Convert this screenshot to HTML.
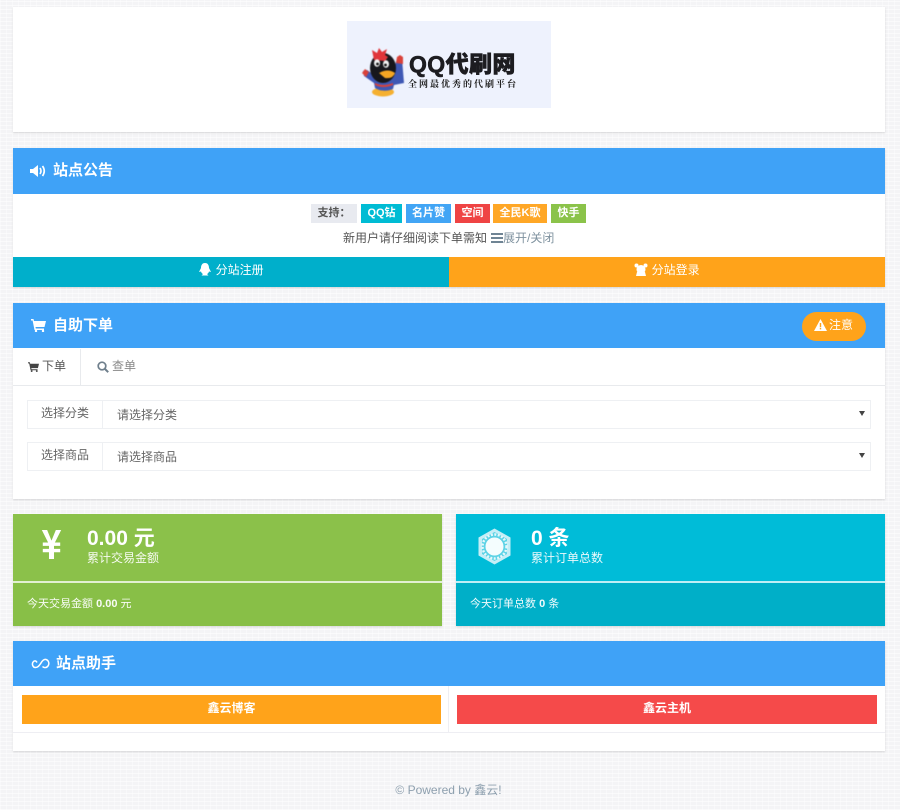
<!DOCTYPE html>
<html lang="zh-CN">
<head>
<meta charset="utf-8">
<title>QQ代刷网</title>
<style>
*{box-sizing:border-box}
html,body{margin:0;padding:0}
body{width:900px;height:810px;position:relative;overflow:hidden;font-family:"Liberation Sans","Noto Sans CJK SC",sans-serif;font-size:12px;color:#555;background-color:#f4f4f6;background-image:repeating-linear-gradient(0deg,rgba(255,255,255,.55) 0 1px,transparent 1px 4px),repeating-linear-gradient(90deg,rgba(255,255,255,.4) 0 1px,transparent 1px 6px)}
#wrap{position:absolute;left:0;top:0;width:900px;height:810px;filter:blur(.35px)}
.a{position:absolute}
.panel{position:absolute;left:13px;width:872px;background:#fff;box-shadow:0 1px 2px rgba(0,0,0,.13)}
.head{position:absolute;left:0;top:0;width:100%;height:46px;background:#3fa2f7;color:#fff;font-size:15px;font-weight:bold;line-height:45px}
.head svg{position:absolute}
.head span{position:absolute;top:0;white-space:nowrap}
.tag{position:absolute;top:204px;height:19px;line-height:18px;text-align:center;color:#fff;font-size:11px;font-weight:bold}
.btn{position:absolute;color:#fff;text-align:center;font-size:12px}
.grp{position:absolute;left:14px;width:844px;height:29px;border:1px solid #eef0f3;background:#fff}
.grp b{position:absolute;left:0;top:0;width:75px;height:27px;border-right:1px solid #eef0f3;font-weight:normal;text-align:center;line-height:24px;color:#666}
.grp i{position:absolute;left:89px;top:0;font-style:normal;line-height:28px;color:#666}
.grp u{position:absolute;right:5px;top:10px;width:0;height:0;border-left:3px solid transparent;border-right:3px solid transparent;border-top:5px solid #444}
.stat{position:absolute;top:514px;width:429px;height:112px;color:#fff;box-shadow:0 1px 2px rgba(0,0,0,.12)}
.stat .line{position:absolute;left:0;top:67px;width:100%;height:2px;background:rgba(255,255,255,.75)}
.stat .bot{position:absolute;left:0;top:69px;width:100%;height:43px}
.stat .num{position:absolute;top:11px;font-size:21px;font-weight:bold;line-height:28px;white-space:nowrap}
.stat .sub{position:absolute;top:35px;font-size:12px;line-height:18px;white-space:nowrap;opacity:.92}
.stat .today{position:absolute;left:14px;top:12px;font-size:11px;line-height:18px;white-space:nowrap;opacity:.95}
</style>
</head>
<body>
<div id="wrap">

<div class="panel" style="top:7px;height:125px"></div>
<div class="a" style="left:347px;top:21px;width:204px;height:87px;background:#eef2fd">
<svg width="204" height="87" viewBox="0 0 204 87" style="position:absolute;left:0;top:0;filter:blur(.5px)">
<ellipse cx="36" cy="71" rx="11" ry="4.500" fill="#f5b030"/>
<path d="M16 50 L20 49 L30 56 L44 56 L50 38 L55 38 L57 62 L47 64 L46 68 Q36 72 28 67 L27 62 L17 55Z" fill="#3f58b4"/>
<path d="M49 42 L50 36 L53 34 L56 36 L56 43Z" fill="#d9423a"/>
<path d="M15 52 L18 48 L22 51 L19 56Z" fill="#d9423a"/>
<path d="M28 62 Q36 66 46 62 L46 64 Q36 68 28 64Z" fill="#d9423a"/>
<ellipse cx="36" cy="47" rx="13" ry="15" fill="#17171c"/>
<path d="M27 39 L25 29 L30 32 L32 27 L35 31 L40 28 L38 34 L41 36 L38 40Z" fill="#e0353a"/>
<ellipse cx="30" cy="42" rx="3" ry="3.800" fill="#f2f2f2"/>
<ellipse cx="39" cy="43" rx="3" ry="3.800" fill="#f2f2f2"/>
<circle cx="30.500" cy="43" r="1.400" fill="#111"/>
<circle cx="38.500" cy="44" r="1.400" fill="#111"/>
<path d="M32 52 Q41 47 48 52 Q46 58 38 57Z" fill="#f5a623"/>
</svg>
<div class="a" style="left:62px;top:29px;font-size:23px;line-height:28px;font-weight:900;color:#1c1c20;white-space:nowrap;letter-spacing:.4px;-webkit-text-stroke:.6px #1c1c20;filter:blur(.3px)">QQ代刷网</div>
<div class="a" style="left:61px;top:57px;font-size:9px;line-height:12px;font-weight:bold;color:#222;white-space:nowrap;letter-spacing:2px;font-family:'Noto Serif CJK SC',serif">全网最优秀的代刷平台</div>
</div>

<div class="panel" style="top:148px;height:139px">
<div class="head">
<svg style="left:17px;top:17px" width="17" height="12" viewBox="0 0 17 12"><path d="M0 4H3L8 0V12L3 8H0Z" fill="#fff"/><path d="M10 3Q12 6 10 9M12.500 1Q16 6 12.500 11" stroke="#fff" stroke-width="1.700" fill="none"/></svg>
<span style="left:40px">站点公告</span>
</div>
<div class="btn" style="left:0;top:109px;width:436px;height:30px;background:#00afcb;line-height:26px"><svg width="14" height="13" viewBox="0 0 14 13" style="vertical-align:-2px"><path d="M7 0C4 0 3 2.500 3 5L1 9 3 8.500C3.500 10 4 10.500 5 11L3.500 12.500H10.500L9 11C10 10.500 10.500 10 11 8.500L13 9 11 5C11 2.500 10 0 7 0Z" fill="#fff"/></svg> 分站注册</div>
<div class="btn" style="left:436px;top:109px;width:436px;height:30px;background:#ffa31a;line-height:26px"><svg width="14" height="13" viewBox="0 0 14 13" style="vertical-align:-2px"><circle cx="7" cy="6.500" r="4.500" fill="#fff"/><circle cx="2.500" cy="2.500" r="2" fill="#fff"/><circle cx="11.500" cy="2.500" r="2" fill="#fff"/><path d="M3 9H11L12 13H2Z" fill="#fff"/></svg> 分站登录</div>
</div>
<div class="tag" style="left:311px;width:46px;background:#e8eaf0;color:#555">支持：</div>
<div class="tag" style="left:361px;width:41px;background:#00bcd4">QQ钻</div>
<div class="tag" style="left:406px;width:45px;background:#42a5f5">名片赞</div>
<div class="tag" style="left:455px;width:35px;background:#ef4444">空间</div>
<div class="tag" style="left:493px;width:54px;background:#ffa726">全民K歌</div>
<div class="tag" style="left:551px;width:35px;background:#8bc34a">快手</div>
<div class="a" style="left:343px;top:229px;line-height:18px;white-space:nowrap;color:#555">新用户请仔细阅读下单需知</div>
<svg class="a" style="left:491px;top:233px" width="12" height="10" viewBox="0 0 12 10"><path d="M0 0H12V2H0ZM0 4H12V6H0ZM0 8H12V10H0Z" fill="#6f8494"/></svg>
<div class="a" style="left:503px;top:229px;line-height:18px;white-space:nowrap;color:#7f929f">展开/关闭</div>

<div class="panel" style="top:303px;height:196px">
<div class="head" style="height:45px">
<svg style="left:18px;top:16px" width="15" height="13" viewBox="0 0 15 13"><path d="M0 0H2.500L3 2H15L13.500 8H4.500L4.800 9.500H13V11H3.500L1.600 1.500H0Z" fill="#fff"/><circle cx="5" cy="12" r="1.200" fill="#fff"/><circle cx="12" cy="12" r="1.200" fill="#fff"/></svg>
<span style="left:40px">自助下单</span>
</div>
<div class="a" style="left:789px;top:9px;width:64px;height:29px;border-radius:15px;background:#ffa31a;color:#fff;line-height:27px;padding-left:27px;font-size:12px">注意</div>
<svg class="a" style="left:801px;top:16px" width="13" height="12" viewBox="0 0 13 12"><path fill-rule="evenodd" d="M6.500 0L13 12H0ZM5.800 4V8.200H7.200V4ZM5.800 9V10.400H7.200V9Z" fill="#fff"/></svg>
<div class="a" style="left:0;top:82px;width:872px;height:1px;background:#e8eaed"></div>
<div class="a" style="left:67px;top:46px;width:1px;height:37px;background:#e8eaed"></div>
<svg class="a" style="left:15px;top:59px" width="11" height="10" viewBox="0 0 15 13"><path d="M0 0H2.500L3 2H15L13.500 8H4.500L4.800 9.500H13V11H3.500L1.600 1.500H0Z" fill="#444"/><circle cx="5" cy="12" r="1.300" fill="#444"/><circle cx="12" cy="12" r="1.300" fill="#444"/></svg>
<div class="a" style="left:29px;top:54px;line-height:18px;color:#555">下单</div>
<svg class="a" style="left:84px;top:58px" width="12" height="12" viewBox="0 0 12 12"><circle cx="5" cy="5" r="3.800" stroke="#6f7f8c" stroke-width="1.700" fill="none"/><path d="M8 8L11.200 11.200" stroke="#6f7f8c" stroke-width="2"/></svg>
<div class="a" style="left:99px;top:54px;line-height:18px;color:#888">查单</div>
<div class="grp" style="top:97px"><b>选择分类</b><i>请选择分类</i><u></u></div>
<div class="grp" style="top:139px"><b>选择商品</b><i>请选择商品</i><u></u></div>
</div>

<div class="stat" style="left:13px;background:#8bc14a">
<svg class="a" style="left:27px;top:15px" width="23" height="30" viewBox="0 0 22 31"><path d="M1 1H6.500L11 12 15.500 1H21L14.500 14H20V17.500H13.600V20.500H20V24H13.600V31H8.400V24H2V20.500H8.400V17.500H2V14H7.500Z" fill="#fff"/></svg>
<div class="num" style="left:74px">0.00 元</div>
<div class="sub" style="left:74px">累计交易金额</div>
<div class="line"></div>
<div class="bot" style="background:#88bf47"><div class="today">今天交易金额 <b>0.00</b> 元</div></div>
</div>

<div class="stat" style="left:456px;background:#00bcd8">
<svg class="a" style="left:22px;top:14px" width="33" height="37" viewBox="0 0 33 37"><path d="M16.500 0.500L32.500 9.500V27.500L16.500 36.500L0.500 27.500V9.500Z" fill="#c5eef6"/><path d="M16.500 4L29 11V26L16.500 33L4 26V11Z" fill="#5dd3e6"/><circle cx="16.500" cy="18.500" r="12" fill="none" stroke="#e5f8fb" stroke-width="2.500" stroke-dasharray="2 1.500"/><circle cx="16.500" cy="18.500" r="9" fill="#f4fdfe"/></svg>
<div class="num" style="left:75px">0 条</div>
<div class="sub" style="left:75px">累计订单总数</div>
<div class="line"></div>
<div class="bot" style="background:#00afc8"><div class="today">今天订单总数 <b>0</b> 条</div></div>
</div>

<div class="panel" style="top:641px;height:110px">
<div class="head" style="height:45px">
<svg style="left:18px;top:17px" width="19" height="11" viewBox="0 0 19 11"><path d="M6 4.500C5 2.500 3.500 2.500 2.500 3.500 0.500 5.500 1.500 9.500 4.500 9.500 7.500 9.500 8.500 7 10 5 11.500 2.500 13 1 15 1.500 18 2.500 18.500 6 17 8 15.500 10 13 10 11.500 8.500" fill="none" stroke="#fff" stroke-width="1.500"/></svg>
<span style="left:43px">站点助手</span>
</div>
<div class="btn" style="left:9px;top:54px;width:419px;height:29px;background:#ffa31a;line-height:27px;font-weight:bold">鑫云博客</div>
<div class="btn" style="left:444px;top:54px;width:420px;height:29px;background:#f54a4a;line-height:27px;font-weight:bold">鑫云主机</div>
<div class="a" style="left:435px;top:45px;width:1px;height:46px;background:#eeeef3"></div>
<div class="a" style="left:0;top:91px;width:872px;height:1px;background:#eeeef3"></div>
</div>

<div class="a" style="left:0;top:781px;width:897px;text-align:center;line-height:18px;color:#8d9fae;font-size:12px">© Powered by 鑫云!</div>

</div>
</body>
</html>
